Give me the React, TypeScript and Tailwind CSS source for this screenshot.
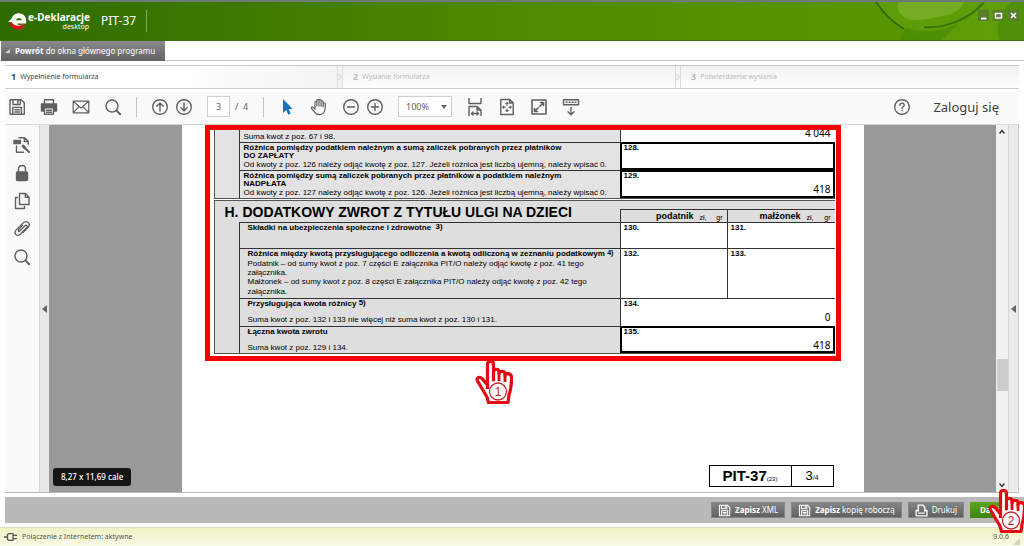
import type { ReactNode } from 'react';

const stroke = {
  fill: 'none',
  stroke: 'currentColor',
  strokeWidth: 1.4,
  strokeLinejoin: 'round' as const,
  strokeLinecap: 'round' as const,
};

function Icon({ children, className = 'size-[18px]' }: { children: ReactNode; className?: string }) {
  return (
    <svg viewBox="0 0 18 18" className={className} aria-hidden="true" {...stroke}>
      {children}
    </svg>
  );
}

const SaveIcon = ({ className }: { className?: string }) => (
  <Icon className={className}>
    <path d="M2 1.8h11.3L16.3 5v11.2H2zM5 1.8v4.7h7.2V1.8M9.8 3v2M4.8 16v-6.6h8.6V16M7 11.7h4.4M7 14h4.4" />
  </Icon>
);

const SearchIcon = () => (
  <Icon>
    <circle cx="8" cy="8" r="6" />
    <path d="M12.4 12.4l3.8 3.8" strokeWidth="2" />
  </Icon>
);

const PrinterIcon = () => (
  <Icon>
    <path d="M4.5 5.5V1.7h9v3.8" />
    <path d="M1.5 6h15v7h-2.6v-3.2H4.1V13H1.5z" fill="currentColor" />
    <path d="M4.5 10v6.3h9V10M6.5 12.3h5M6.5 14.2h5" />
  </Icon>
);

const MailIcon = () => (
  <Icon>
    <path d="M1.2 3.2h15.6v11.6H1.2zM1.4 3.4L9 10l7.6-6.6M1.4 14.6l5.4-6M16.6 14.6l-5.4-6" strokeWidth="1.2" />
  </Icon>
);

const ArrowCircle = ({ up }: { up?: boolean }) => (
  <Icon>
    <circle cx="9" cy="9" r="7.3" />
    <path d={up ? 'M9 13V5.2M5.9 8.2L9 5.1l3.1 3.1' : 'M9 5v7.8M5.9 9.8L9 12.9l3.1-3.1'} />
  </Icon>
);

const ZoomCircle = ({ plus }: { plus?: boolean }) => (
  <Icon>
    <circle cx="9" cy="9" r="7.3" />
    <path d={plus ? 'M5.4 9h7.2M9 5.4v7.2' : 'M5.4 9h7.2'} />
  </Icon>
);

const CursorIcon = () => (
  <svg viewBox="0 0 18 18" className="size-[18px]" aria-hidden="true">
    <path d="M5 1v14l3.2-2.9 2.1 4.6 2.4-1.1-2.1-4.5 4-.3z" fill="#1473c6" />
  </svg>
);

const HandIcon = () => (
  <Icon>
    <path
      d="M5 10.500V4.200c0-1.300 1.900-1.300 1.900 0V8M6.900 8V2.600c0-1.400 2.100-1.400 2.100 0V8M9 8V2.600c0-1.400 2.100-1.400 2.100 0V8.300M11.100 8.300V3.800c0-1.300 2-1.300 2 0v5M13.100 8.800V6.100c0-1.300 2.200-1.200 2.200 0 0 4.500.1 7-2.200 9.300-.9.9-1.700 1.300-3.600 1.300-2.600 0-3.600-.8-4.800-2.600L1.500 10.500c-.7-1.200.8-2.200 1.700-1.200L5 11.200"
      strokeWidth="1.2"
    />
  </Icon>
);

const FitWidthIcon = () => (
  <Icon>
    <path d="M3 .5v5h12v-5M3 17.500V8.500h8l4 3.500v5.500M11 8.500V12h4M5.500 15.500h7M7 14l-1.600 1.500L7 17M11 14l1.600 1.500L11 17" />
  </Icon>
);

const FitPageIcon = () => (
  <Icon>
    <path d="M2.800 1.500h9l3.400 3.400v11.600H2.800zM11.500 1.500V5H15" />
    <path d="M9 4.800v2.400M9 11v2.400M4.800 9.100h2.400M10.800 9.100h2.400M8 5.700l1-1 1 1M8 12.500l1 1 1-1M5.700 8.100l-1 1 1 1M12.300 8.100l1 1-1 1" strokeWidth="1.100" />
  </Icon>
);

const FullScreenIcon = () => (
  <Icon>
    <path d="M2 2h14v14H2z" strokeWidth="1.600" />
    <path d="M9.800 8.200l3.500-3.500M10.500 4.500h3v3M8.200 9.800l-3.500 3.500M4.500 10.500v3h3" strokeWidth="1.600" />
  </Icon>
);

const RulerIcon = () => (
  <Icon>
    <path d="M1.500 1.800h15v5h-15zM9 9.500v7M6 13.700l3 3 3-3" />
    <path d="M4 4.300h10" strokeDasharray="1 2" />
  </Icon>
);

const HelpIcon = () => (
  <Icon>
    <circle cx="9" cy="9" r="7.300" />
    <path d="M6.900 7.300c0-2.700 4.300-2.700 4.300 0 0 1.500-2.100 1.500-2.100 3.200M9.100 12.700v.1" />
  </Icon>
);

const ModelIcon = () => (
  <Icon>
    <path d="M6 1.700h5.500l3.700 3.600v3M11.300 1.900V5.500H15M3.500 10v6.200h7" />
    <path d="M1 4.500h6.500v3H1z" fill="currentColor" />
    <path d="M10 10l2 2" strokeWidth="3" />
    <path d="M11 11l5 5" strokeWidth="2" />
  </Icon>
);

const LockIcon = () => (
  <Icon>
    <path d="M5.500 8V5c0-4.700 7-4.700 7 0v3" />
    <rect x="3.500" y="8" width="11" height="8.500" rx="1" fill="currentColor" />
  </Icon>
);

const PagesIcon = () => (
  <Icon>
    <path d="M6.500 1.500h6l3.500 3.500v7.500H6.500zM12.300 1.700V5.200H16M4.500 5.500H2.500v11h9v-2" />
  </Icon>
);

const ClipIcon = () => (
  <Icon>
    <path d="M6 11.800l6-6c1.300-1.300 3 .4 1.800 1.700l-6.500 6.700c-3 3-7.200-1-4.300-4.100l7-7c3.900-3.600 8.200.8 5.100 4.300l-4.800 5M6 11.800c-1.200-1-.6-2.100.1-2.800l3.600-3.600" strokeWidth="1.300" />
  </Icon>
);

function Divider() {
  return <span className="h-5 w-px bg-[#c4c4c4]" />;
}

function ToolButton({ label, children }: { label: string; children: ReactNode }) {
  return (
    <button type="button" aria-label={label} className="flex shrink-0 items-center justify-center">
      {children}
    </button>
  );
}

function PointingHand({ number }: { number: string }) {
  return (
    <svg viewBox="0 0 40 46" className="h-[46px] w-10" aria-hidden="true">
      <path
        d="M12.500 29V4.500c0-4 6-4 6 0V20 12c0-3.600 5.500-3.600 5.500 0v2c0-3.600 6-3.600 6 0v2c0-3.600 6.500-3.200 6.500 1.500 0 9-.5 12-2.500 17.500L33 42.500H13.500L12 37 2.500 21c-1.500-3 2-5 4.500-2.500l5.500 6.500"
        fill="#fff"
        stroke="#e30b13"
        strokeWidth="3.200"
        strokeLinejoin="round"
      />
      <path d="M18.500 11v10M24 13v8M30 15v7" stroke="#e30b13" strokeWidth="2.800" />
      <circle cx="23" cy="31.500" r="8.500" fill="#fff" stroke="#c8232a" strokeWidth="1.300" />
      <text x="23" y="36" textAnchor="middle" fontSize="12" fill="#d3151c" fontFamily="Liberation Sans, sans-serif">
        {number}
      </text>
    </svg>
  );
}

function Field({ no, value = '' }: { no: string; value?: string }) {
  return (
    <div className="flex flex-col gap-[2px]">
      <label htmlFor={`poz-${no}`} className="pl-[3px] text-[8px] leading-[10px] font-bold">
        {no}.
      </label>
      <input
        id={`poz-${no}`}
        defaultValue={value}
        className="h-3 w-full bg-transparent pr-1 text-right font-['Noto_Sans',sans-serif] text-[10px] leading-3 outline-none"
      />
    </div>
  );
}

const cell = 'border-t border-l border-[#333] p-0 align-top';
const heavy = 'outline-2 -outline-offset-2 outline-black';

function FormTables() {
  return (
    <div className="bg-white pr-px pb-[2px] pl-1 font-['Liberation_Sans',Arial,sans-serif] text-[8px] leading-[10px] text-black">
      <table className="w-full table-fixed border-separate border-spacing-0 border-b border-l border-[#555] bg-[#e3e3e3]">
        <colgroup>
          <col className="w-6" />
          <col />
          <col className="w-[215px]" />
        </colgroup>
        <tbody>
          <tr className="h-3">
            <td rowSpan={3} className="p-0" />
            <td className="border-l border-[#333] p-0 pl-1 align-bottom">Suma kwot z poz. 67 i 98.</td>
            <td className="border-l border-[#333] bg-white p-0 align-top">
              <div className="flex h-3 items-end justify-end overflow-hidden pr-1 pb-1 font-['Noto_Sans',sans-serif] text-[10px] leading-[10px]">
                4 044
              </div>
            </td>
          </tr>
          <tr className="h-7">
            <td className={`${cell} pl-1`}>
              <p className="pt-px font-bold leading-[8px]">
                Różnica pomiędzy podatkiem należnym a sumą zaliczek pobranych przez płatników
                <br />
                DO ZAPŁATY
              </p>
              <p>Od kwoty z poz. 126 należy odjąć kwotę z poz. 127. Jeżeli różnica jest liczbą ujemną, należy wpisać 0.</p>
            </td>
            <td className={`${cell} ${heavy} bg-white`}>
              <Field no="128" />
            </td>
          </tr>
          <tr className="h-7">
            <td className={`${cell} pl-1`}>
              <p className="pt-px font-bold leading-[8px]">
                Różnica pomiędzy sumą zaliczek pobranych przez płatników a podatkiem należnym
                <br />
                NADPŁATA
              </p>
              <p>Od kwoty z poz. 127 należy odjąć kwotę z poz. 126. Jeżeli różnica jest liczbą ujemną, należy wpisać 0.</p>
            </td>
            <td className={`${cell} ${heavy} bg-white`}>
              <Field no="129" value="418" />
            </td>
          </tr>
        </tbody>
      </table>

      <table className="mt-px w-full table-fixed border-separate border-spacing-0 border-y border-l border-[#555] bg-[#dedede]">
        <colgroup>
          <col className="w-6" />
          <col />
          <col className="w-[107px]" />
          <col className="w-[108px]" />
        </colgroup>
        <thead>
          <tr className="h-[21px]">
            <th colSpan={2} className="p-0 pl-[10px] text-left text-[14px] leading-[14px] font-bold">
              H. DODATKOWY ZWROT Z TYTUŁU ULGI NA DZIECI
            </th>
            {['podatnik', 'małżonek'].map((name) => (
              <th key={name} className="p-0 align-bottom font-bold">
                <div className="flex h-[13px] items-end border-t border-l border-[#333] pr-1">
                  <span className="w-[73px] text-right text-[9px] leading-[12px]">{name}</span>
                  <span className="pl-[6px] text-[7px] leading-[8px] font-normal">zł,</span>
                  <span className="ml-auto text-[7px] leading-[8px] font-normal">gr</span>
                </div>
              </th>
            ))}
          </tr>
        </thead>
        <tbody>
          <tr className="h-[26px]">
            <td rowSpan={4} className="p-0" />
            <td className={`${cell} pl-2`}>
              <p className="font-bold">
                Składki na ubezpieczenia społeczne i zdrowotne <span className="relative -top-px">&nbsp;3)</span>
              </p>
            </td>
            <td className={`${cell} bg-white`}>
              <Field no="130" />
            </td>
            <td className={`${cell} bg-white`}>
              <Field no="131" />
            </td>
          </tr>
          <tr className="h-[50px]">
            <td className={`${cell} pl-2`}>
              <div className="font-bold">
                Różnica między kwotą przysługującego odliczenia a kwotą odliczoną w zeznaniu podatkowym{' '}
                <span className="relative -top-px text-[7px] leading-none">4)</span>
              </div>
              <p className="leading-[9px]">
                Podatnik – od sumy kwot z poz. 7 części E załącznika PIT/O należy odjąć kwotę z poz. 41 tego
                <br />
                załącznika.
              </p>
              <p>Małżonek – od sumy kwot z poz. 8 części E załącznika PIT/O należy odjąć kwotę z poz. 42 tego</p>
              <p>załącznika.</p>
            </td>
            <td className={`${cell} bg-white`}>
              <Field no="132" />
            </td>
            <td className={`${cell} bg-white`}>
              <Field no="133" />
            </td>
          </tr>
          <tr className="h-7">
            <td className={`${cell} pl-2`}>
              <p className="font-bold">
                Przysługująca kwota różnicy <span className="relative -top-px">5)</span>
              </p>
              <p className="pt-[6px]">Suma kwot z poz. 132 i 133 nie więcej niż suma kwot z poz. 130 i 131.</p>
            </td>
            <td colSpan={2} className={`${cell} bg-white`}>
              <Field no="134" value="0" />
            </td>
          </tr>
          <tr className="h-[27px]">
            <td className={`${cell} pl-2`}>
              <p className="font-bold">Łączna kwota zwrotu</p>
              <p className="pt-[6px]">Suma kwot z poz. 129 i 134.</p>
            </td>
            <td colSpan={2} className={`${cell} ${heavy} bg-white`}>
              <Field no="135" value="418" />
            </td>
          </tr>
        </tbody>
      </table>
    </div>
  );
}

function Header() {
  return (
    <header className="relative flex h-[41px] items-center border-t-2 border-b border-t-[#6d7a78] border-b-[#3c6a10] bg-linear-to-r from-[#2e6b00] via-[#4f8a00] to-[#5a9a00] pl-2 text-white">
      <svg viewBox="0 0 160 38" className="absolute top-0 right-0 h-[38px] w-40" aria-hidden="true">
        <path d="M12 0c8 12 16 20 28 27l17 11H160V0z" fill="#62a00c" opacity=".7" />
        <path d="M12 0c8 12 16 20 28 27" fill="none" stroke="#2f6d08" strokeWidth="2" />
        <path d="M34 0c-3 16 14 21 30 17C80 13 94 14 100 0z" fill="#86b63e" opacity=".55" />
        <path d="M60 25c20 2 46-8 60-25" fill="none" stroke="#35740a" strokeWidth="2" />
        <path d="M36 38l6-12c16 5 38 3 52-4L78 38z" fill="#478a04" opacity=".7" />
        <path d="M148 0c-14 10-16 24-13 38h25V0z" fill="#4f8f0a" />
      </svg>
      <svg viewBox="0 0 20 20" className="h-5 w-5" aria-hidden="true">
        <path d="M0 10.500C2.500 9 3.500 8 4 6.500 6 1.500 14 .5 17 5.500c1.200 2 1.500 4.500 1 7H9c1 2 4 2 6 1l2 1c-4 6-13 4.500-14.500-3.500z" fill="#fff" />
        <path d="M8 9.300c.8-2.800 5-3 6 0z" fill="#3a7500" />
        <path d="M1.500 11.500C2.500 19.500 13 21.500 17.500 14l-2.500-.5c-4 2.500-9 1.500-11.500-2.500z" fill="#d5131a" />
      </svg>
      <div className="w-[61px] text-right">
        <p className="text-[10px] leading-[11px] font-bold whitespace-nowrap">e-Deklaracje</p>
        <p className="text-[7px] leading-[7px]">desktop</p>
      </div>
      <h1 className="ml-3 w-[45px] text-[12px] leading-4">PIT-37</h1>
      <span className="h-[22px] w-px bg-[#7fa860]" />
      <div className="relative mr-[5px] mb-3 ml-auto flex gap-1">
        {['Minimalizuj', 'Maksymalizuj', 'Zamknij'].map((name, i) => (
          <button
            key={name}
            type="button"
            aria-label={name}
            className="flex size-[11px] items-center justify-center bg-[#557d2c]"
          >
            <svg viewBox="0 0 11 11" className="size-[11px]" fill="none" stroke="#fff" strokeWidth="1.600" aria-hidden="true">
              {i === 0 && <path d="M3 8.500h5.500" strokeWidth="2" />}
              {i === 1 && <path d="M2.500 3.500h6v4.500h-6z" />}
              {i === 2 && <path d="M3 3l5 5M8 3L3 8" />}
            </svg>
          </button>
        ))}
      </div>
    </header>
  );
}

const steps = ['Wypełnienie formularza', 'Wysłanie formularza', 'Potwierdzenie wysłania'];

function Steps() {
  return (
    <ol className="grid h-[23px] grid-cols-3 border-b border-[#cfcfcf] bg-linear-to-b from-[#f1f1f1] to-white">
      {steps.map((step, i) => (
        <li
          key={step}
          className={`flex items-center justify-between ${
            i === 0 ? 'bg-linear-to-r from-white via-white to-[#f3f3f3] pl-[6px] text-[#444]' : 'pl-[10px] text-[#bdbdbd]'
          }`}
        >
          <span className="flex items-center gap-1">
            <b className="text-[9px] leading-3">{i + 1}</b>
            <span className="text-[7px] leading-3">{step}</span>
          </span>
          {i < 2 && (
            <span className="flex h-full w-[6px] items-center border-x border-[#dcdcdc] text-[#ccc]">
              <svg viewBox="0 0 4 8" className="h-2 w-1" fill="none" stroke="currentColor" aria-hidden="true">
                <path d="M.500 1l2.500 3L.500 7" />
              </svg>
            </span>
          )}
        </li>
      ))}
    </ol>
  );
}

function Toolbar() {
  return (
    <div className="flex h-9 items-center border-b border-[#d8d8d8] bg-[#fafafa] pr-5 pl-[3px] text-[#606060]">
      <div className="flex items-center gap-[14px]">
        <ToolButton label="Zapisz"><SaveIcon /></ToolButton>
        <ToolButton label="Drukuj plik"><PrinterIcon /></ToolButton>
        <ToolButton label="Wyślij pocztą"><MailIcon /></ToolButton>
        <ToolButton label="Znajdź"><SearchIcon /></ToolButton>
        <Divider />
        <div className="flex gap-[6px]">
          <ToolButton label="Poprzednia strona"><ArrowCircle up /></ToolButton>
          <ToolButton label="Następna strona"><ArrowCircle /></ToolButton>
        </div>
        <label className="flex w-[42px] items-center gap-[5px] text-[9px] whitespace-nowrap">
          <input
            aria-label="Numer strony"
            defaultValue="3"
            className="h-[21px] w-[23px] shrink-0 border border-[#cfcfcf] bg-white text-center text-[9px]"
          />
          /&nbsp; 4
        </label>
        <Divider />
        <ToolButton label="Zaznaczanie"><CursorIcon /></ToolButton>
        <ToolButton label="Przesuwanie"><HandIcon /></ToolButton>
        <div className="flex gap-[6px]">
          <ToolButton label="Pomniejsz"><ZoomCircle /></ToolButton>
          <ToolButton label="Powiększ"><ZoomCircle plus /></ToolButton>
        </div>
        <div className="grid items-center">
          <select
            aria-label="Powiększenie"
            className="col-start-1 row-start-1 h-[21px] w-[54px] appearance-none border border-[#cfcfcf] bg-white pl-[7px] text-[9px]"
          >
            <option>100%</option>
          </select>
          <svg viewBox="0 0 6 4" className="pointer-events-none col-start-1 row-start-1 mr-[5px] h-1 w-[6px] justify-self-end" aria-hidden="true">
            <path d="M0 0h6L3 4z" fill="currentColor" />
          </svg>
        </div>
        <ToolButton label="Dopasuj szerokość"><FitWidthIcon /></ToolButton>
        <ToolButton label="Dopasuj stronę"><FitPageIcon /></ToolButton>
        <ToolButton label="Pełny ekran"><FullScreenIcon /></ToolButton>
        <ToolButton label="Pasek narzędzi"><RulerIcon /></ToolButton>
      </div>
      <div className="ml-auto flex items-center gap-[22px]">
        <ToolButton label="Pomoc"><HelpIcon /></ToolButton>
        <a href="#zaloguj" className="text-[13px] leading-4 whitespace-nowrap text-[#3f3f3f]">
          Zaloguj się
        </a>
      </div>
    </div>
  );
}

function PanelArrow() {
  return (
    <svg viewBox="0 0 5 8" className="h-2 w-[5px]" aria-hidden="true">
      <path d="M5 0v8L0 4z" fill="#666" />
    </svg>
  );
}

function Viewer() {
  return (
    <div className="flex min-h-0 flex-1 border-b border-[#bdbdbd]">
      <nav aria-label="Panele" className="flex w-[34px] shrink-0 flex-col items-center gap-[10px] bg-[#fafafa] pt-[11px] text-[#606060]">
        <ToolButton label="Drzewo modelu"><ModelIcon /></ToolButton>
        <ToolButton label="Zabezpieczenia"><LockIcon /></ToolButton>
        <ToolButton label="Strony"><PagesIcon /></ToolButton>
        <ToolButton label="Załączniki"><ClipIcon /></ToolButton>
        <ToolButton label="Szukaj"><SearchIcon /></ToolButton>
      </nav>
      <div className="flex w-[10px] shrink-0 items-center justify-center border-l border-[#d6d6d6] bg-[#e9e9e9]">
        <PanelArrow />
      </div>
      <main className="relative flex min-w-0 flex-1 justify-center bg-[#999]">
        <article className="flex w-full max-w-[682px] flex-col justify-between bg-white px-[23px] pb-[5px]">
          <section className="relative border-[5px] border-[#f40000]">
            <FormTables />
            <div className="absolute top-full left-[265px] mt-1">
              <PointingHand number="1" />
            </div>
          </section>
          <footer className="mr-[7px] flex h-[22px] self-end border border-black font-['Liberation_Sans',Arial,sans-serif] text-black">
            <p className="flex w-[82px] items-baseline justify-center border-r border-black">
              <b className="text-[15px] leading-[19px]">PIT-37</b>
              <span className="text-[6px]">(23)</span>
            </p>
            <p className="flex w-[41px] items-baseline justify-center">
              <span className="text-[13px] leading-[19px]">3</span>
              <span className="text-[7px]">/4</span>
            </p>
          </footer>
        </article>
        <p className="absolute bottom-[6px] left-1 rounded-[3px] bg-[#151515] px-2 text-[8px] leading-[18px] font-medium text-white">
          8,27 x 11,69 cale
        </p>
      </main>
      <div className="flex w-[13px] shrink-0 flex-col items-center border-r border-[#d6d6d6] bg-[#f1f1f1] py-1 text-[#333]">
        <svg viewBox="0 0 6 6" className="size-[6px]" fill="none" stroke="currentColor" strokeWidth="1.400" aria-hidden="true">
          <path d="M.500 4.500L3 1.500l2.500 3" />
        </svg>
        <div className="grow-[71]" />
        <div className="h-8 w-[11px] bg-[#cdcdcd]" />
        <div className="grow-[29]" />
        <svg viewBox="0 0 6 6" className="size-[6px]" fill="none" stroke="currentColor" strokeWidth="1.400" aria-hidden="true">
          <path d="M.500 1.500L3 4.500l2.500-3" />
        </svg>
      </div>
      <div className="flex w-[10px] shrink-0 items-center justify-center border-r border-[#ccc] bg-[#ebebeb]">
        <PanelArrow />
      </div>
    </div>
  );
}

const actionButton =
  'flex h-4 items-center gap-1 border border-[#858585] bg-linear-to-b from-[#858585] to-[#606060] px-[6px] text-[8px] leading-3 whitespace-nowrap text-white';

function ActionBar() {
  return (
    <div className="relative mt-1 ml-[5px] flex h-[26px] items-center justify-end gap-[6px] bg-[#b9b9b9] pr-[6px]">
      <button type="button" className={actionButton}>
        <SaveIcon className="size-[13px]" />
        <span><b>Zapisz</b> XML</span>
      </button>
      <button type="button" className={actionButton}>
        <SaveIcon className="size-[13px]" />
        <span><b>Zapisz</b> kopię roboczą</span>
      </button>
      <button type="button" className={actionButton}>
        <Icon className="size-[13px]">
          <path d="M4.500 10V1.500h6.500l2.500 3V10M4.500 9H1.500v7.500h15V9h-3M5 12.500h8" strokeWidth="1.800" />
        </Icon>
        Drukuj
      </button>
      <button
        type="button"
        className="flex h-4 w-12 items-center bg-linear-to-b from-[#5aa51a] to-[#3d8508] pl-[10px] text-[8px] leading-3 font-bold text-white"
      >
        Dalej
      </button>
      <div className="absolute -top-[8px] right-0 -mr-1">
        <PointingHand number="2" />
      </div>
    </div>
  );
}

export default function App() {
  return (
    <div className="flex h-screen min-h-[546px] flex-col overflow-hidden bg-white font-['Noto_Sans','Open_Sans',sans-serif] text-[#333]">
      <Header />
      <div className="flex h-5 border-b border-[#c6c6c6]">
        <a
          href="#powrot"
          className="ml-px flex h-5 items-center gap-[5px] bg-linear-to-b from-[#8a8a8a] to-[#626262] pr-[10px] pl-1 text-[8px] leading-3 whitespace-nowrap text-white"
        >
          <svg viewBox="0 0 5 4" className="h-1 w-[5px]" aria-hidden="true">
            <path d="M5 0v4H0z" fill="#ccc" />
          </svg>
          <span><b>Powrót</b> do okna głównego programu</span>
        </a>
      </div>
      <div className="mt-1 mr-[5px] ml-[5px] flex min-h-0 flex-1 flex-col border-t border-[#c9c9c9]">
        <Steps />
        <Toolbar />
        <Viewer />
      </div>
      <ActionBar />
      <footer className="mt-1 flex h-[19px] items-center gap-1 border-t border-[#dcdcc4] bg-linear-to-b from-[#f1f1c6] to-[#fafae6] pr-1 pl-1 text-[7px] text-[#555]">
        <svg viewBox="0 0 14 8" className="h-2 w-[14px]" fill="none" stroke="currentColor" strokeWidth="1.300" aria-hidden="true">
          <path d="M0 4h3M3.500 1.500l1.500-1h4v7H5l-1.500-1zM9 2.300h4M9 5.700h4" />
        </svg>
        Połączenie z Internetem: aktywne
        <span className="ml-auto">9.0.6</span>
        <svg viewBox="0 0 7 7" className="mt-2 size-[7px]" aria-hidden="true">
          <path d="M7 0v7H0z" fill="#d5d5ba" />
        </svg>
      </footer>
    </div>
  );
}
